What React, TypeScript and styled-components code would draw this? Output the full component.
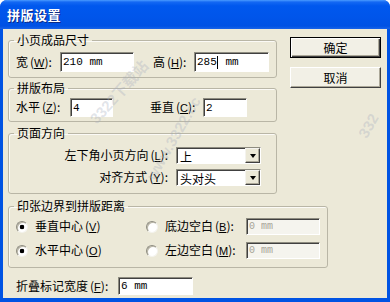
import React from 'react'
import styled, { createGlobalStyle } from 'styled-components'

const GlobalStyle = createGlobalStyle`
  html, body {
    margin: 0;
    padding: 0;
    background: #ffffff;
  }
  body {
    width: 390px;
    height: 302px;
    overflow: hidden;
    font-family: "Noto Sans CJK SC", "Liberation Sans", sans-serif;
    font-size: 12px;
    color: #000;
  }
`

const Window = styled.div`
  position: relative;
  width: 390px;
  height: 302px;
  box-sizing: border-box;
  display: flex;
  flex-direction: column;
  background: #0053e3;
  border-radius: 7px 7px 0 0;
  overflow: hidden;
`

const TitleBar = styled.div`
  height: 29px;
  flex: none;
  display: flex;
  align-items: center;
  padding-left: 7px;
  background: linear-gradient(
    to bottom,
    #4a9bff 0%,
    #1468f3 7%,
    #0058ee 20%,
    #0055ea 60%,
    #0052e4 90%,
    #1a64e8 100%
  );
`

const Title = styled.span`
  color: #fff;
  font-weight: bold;
  font-size: 13px;
  letter-spacing: 0.5px;
  text-shadow: 1px 1px 0 #0b2a86;
`

const Body = styled.div`
  flex: 1;
  margin: 0 3px 4px;
  background: #ece9d8;
  padding: 4px 5px 0;
  display: flex;
  flex-direction: column;
`

const TopRow = styled.div`
  display: flex;
  align-items: flex-start;
`

const LeftCol = styled.div`
  width: 269px;
  display: flex;
  flex-direction: column;
`

const ButtonCol = styled.div`
  margin-left: 13px;
  padding-top: 4px;
  display: flex;
  flex-direction: column;
  gap: 9px;
`

const Button = styled.button<{ $default?: boolean }>`
  width: 91px;
  height: 21px;
  margin: 0;
  padding: 0;
  font-family: inherit;
  font-size: 12px;
  color: #000;
  background: #f2f0e6;
  border: 1px solid ${p => (p.$default ? '#000' : '#fff')};
  border-right-color: ${p => (p.$default ? '#000' : '#404040')};
  border-bottom-color: ${p => (p.$default ? '#000' : '#404040')};
  box-shadow: ${p =>
    p.$default
      ? 'inset 1px 1px 0 #fff, inset -1px -1px 0 #404040, inset -2px -2px 0 #aca899'
      : 'inset -1px -1px 0 #aca899'};
  cursor: pointer;
`

const Group = styled.fieldset<{ $top?: number; $pad: string; $width?: number }>`
  margin: ${p => p.$top || 0}px 0 0 0;
  padding: ${p => p.$pad};
  width: ${p => (p.$width ? `${p.$width}px` : 'auto')};
  box-sizing: border-box;
  min-width: 0;
  border: 1px solid #b9b6a6;
  border-radius: 3px;
  box-shadow: inset 1px 1px 0 #fbfaf6;
`

const Legend = styled.legend`
  margin-left: -2px;
  padding: 0 3px;
  height: 14px;
  line-height: 14px;
  font-size: 12px;
`

const Row = styled.div`
  display: flex;
  align-items: center;
`

const Label = styled.span<{ $w: number; $ml?: number }>`
  width: ${p => p.$w}px;
  margin-left: ${p => p.$ml || 0}px;
  flex: none;
  white-space: nowrap;
  line-height: 14px;
`

const Key = styled.span`
  text-decoration: underline;
  text-underline-offset: 1px;
  font-family: "Liberation Sans", sans-serif;
  font-size: 11px;
`

const Paren = styled.span`
  margin-left: 2px;
`

const Field = styled.div<{ $w: number; $h: number; $disabled?: boolean }>`
  width: ${p => p.$w}px;
  height: ${p => p.$h}px;
  box-sizing: border-box;
  flex: none;
  display: flex;
  align-items: center;
  padding-left: 2px;
  background: ${p => (p.$disabled ? '#f5f4ee' : '#fff')};
  border: 1px solid;
  border-color: #8e8c80 #fff #fff #8e8c80;
  box-shadow: inset 1px 1px 0 #404040;
  font-family: "Liberation Mono", monospace;
  font-size: ${p => (p.$disabled ? 10 : 11)}px;
  color: ${p => (p.$disabled ? '#a7a497' : '#000')};
  white-space: pre;
`

const Caret = styled.span`
  display: inline-block;
  width: 1px;
  height: 13px;
  background: #000;
  margin: 0 1px 0 0;
`

const SelectGrid = styled.div`
  display: grid;
  grid-template-columns: 152px 85px;
  column-gap: 8px;
  row-gap: 5px;
  align-items: center;
`

const SelectLabel = styled.span`
  text-align: right;
  white-space: nowrap;
  line-height: 14px;
`

const Select = styled.div`
  height: 17px;
  box-sizing: border-box;
  display: flex;
  align-items: stretch;
  background: #fff;
  border: 1px solid;
  border-color: #8e8c80 #fff #fff #8e8c80;
  box-shadow: inset 1px 1px 0 #404040;
`

const SelectValue = styled.span`
  flex: 1;
  padding-left: 3px;
  line-height: 15px;
  padding-top: 1px;
`

const DropButton = styled.span`
  width: 15px;
  box-sizing: border-box;
  display: flex;
  align-items: center;
  justify-content: center;
  background: #ece9d8;
  border: 1px solid;
  border-color: #f4f3ee #404040 #404040 #f4f3ee;
  box-shadow: inset -1px -1px 0 #aca899;
  &::after {
    content: '';
    width: 0;
    height: 0;
    border-left: 3.5px solid transparent;
    border-right: 3.5px solid transparent;
    border-top: 4px solid #000;
  }
`

const RadioGrid = styled.div`
  display: grid;
  grid-template-columns: 130px 100px 74px;
  row-gap: 7px;
  align-items: center;
`

const RadioItem = styled.label`
  display: flex;
  align-items: center;
  gap: 7px;
  white-space: nowrap;
  line-height: 14px;
`

const RadioDot = styled.span<{ $on?: boolean }>`
  width: 12px;
  height: 12px;
  box-sizing: border-box;
  flex: none;
  border-radius: 50%;
  border: 1px solid;
  border-color: #8e8c80 #f4f3ee #f4f3ee #8e8c80;
  background: ${p =>
    p.$on ? 'radial-gradient(circle, #000 0 2px, #fff 2.6px)' : '#fff'};
  box-shadow: inset 1px 1px 0 #b9b6a6;
`

const BottomRow = styled(Row)`
  margin-top: 9px;
  padding-left: 8px;
`

const Watermark = styled.span<{ $x: number; $y: number; $deg: number }>`
  position: absolute;
  left: ${p => p.$x}px;
  top: ${p => p.$y}px;
  transform: rotate(${p => p.$deg}deg);
  transform-origin: left center;
  font-family: "Liberation Sans", "Noto Sans CJK SC", sans-serif;
  font-weight: bold;
  font-size: 15px;
  color: rgba(165, 172, 190, 0.32);
  white-space: nowrap;
  pointer-events: none;
`

const L = ({ text, k, colon = true }: { text: string; k: string; colon?: boolean }) => (
  <>
    {text}
    <Paren>(</Paren>
    <Key>{k}</Key>){colon ? ':' : ''}
  </>
)

export default function App() {
  return (
    <>
      <GlobalStyle />
      <Window>
        <TitleBar>
          <Title>拼版设置</Title>
        </TitleBar>
        <Body>
          <TopRow>
            <LeftCol>
              <Group $pad="5px 7px 5px 7px">
                <Legend>小页成品尺寸</Legend>
                <Row>
                  <Label $w={44}>
                    <L text="宽" k="W" />
                  </Label>
                  <Field $w={74} $h={20}>
                    210 mm
                  </Field>
                  <Label $w={41} $ml={19}>
                    <L text="高" k="H" />
                  </Label>
                  <Field $w={75} $h={20}>
                    285
                    <Caret /> mm
                  </Field>
                </Row>
              </Group>

              <Group $top={3} $pad="3px 7px 4px 7px">
                <Legend>拼版布局</Legend>
                <Row>
                  <Label $w={54}>
                    <L text="水平" k="Z" />
                  </Label>
                  <Field $w={43} $h={19}>
                    4
                  </Field>
                  <Label $w={53} $ml={37}>
                    <L text="垂直" k="C" />
                  </Label>
                  <Field $w={44} $h={19}>
                    2
                  </Field>
                </Row>
              </Group>

              <Group $top={4} $pad="7px 7px 7px 7px">
                <Legend>页面方向</Legend>
                <SelectGrid>
                  <SelectLabel>
                    <L text="左下角小页方向" k="L" />
                  </SelectLabel>
                  <Select>
                    <SelectValue>上</SelectValue>
                    <DropButton />
                  </Select>
                  <SelectLabel>
                    <L text="对齐方式" k="Y" />
                  </SelectLabel>
                  <Select>
                    <SelectValue>头对头</SelectValue>
                    <DropButton />
                  </Select>
                </SelectGrid>
              </Group>
            </LeftCol>

            <ButtonCol>
              <Button $default>确定</Button>
              <Button>取消</Button>
            </ButtonCol>
          </TopRow>

          <Group $top={5} $width={320} $pad="5px 7px 8px 7px">
            <Legend>印张边界到拼版距离</Legend>
            <RadioGrid>
              <RadioItem>
                <RadioDot $on />
                <span>
                  <L text="垂直中心" k="V" colon={false} />
                </span>
              </RadioItem>
              <RadioItem>
                <RadioDot />
                <span>
                  <L text="底边空白" k="B" />
                </span>
              </RadioItem>
              <Field $w={74} $h={17} $disabled>
                0 mm
              </Field>
              <RadioItem>
                <RadioDot $on />
                <span>
                  <L text="水平中心" k="O" colon={false} />
                </span>
              </RadioItem>
              <RadioItem>
                <RadioDot />
                <span>
                  <L text="左边空白" k="M" />
                </span>
              </RadioItem>
              <Field $w={74} $h={17} $disabled>
                0 mm
              </Field>
            </RadioGrid>
          </Group>

          <BottomRow>
            <Label $w={102}>
              <L text="折叠标记宽度" k="F" />
            </Label>
            <Field $w={75} $h={18}>
              6 mm
            </Field>
          </BottomRow>
        </Body>
        <Watermark $x={92} $y={110} $deg={-48}>3322下载站</Watermark>
        <Watermark $x={150} $y={170} $deg={-60}>www.3322.cc</Watermark>
        <Watermark $x={362} $y={128} $deg={-60}>332</Watermark>
      </Window>
    </>
  )
}
